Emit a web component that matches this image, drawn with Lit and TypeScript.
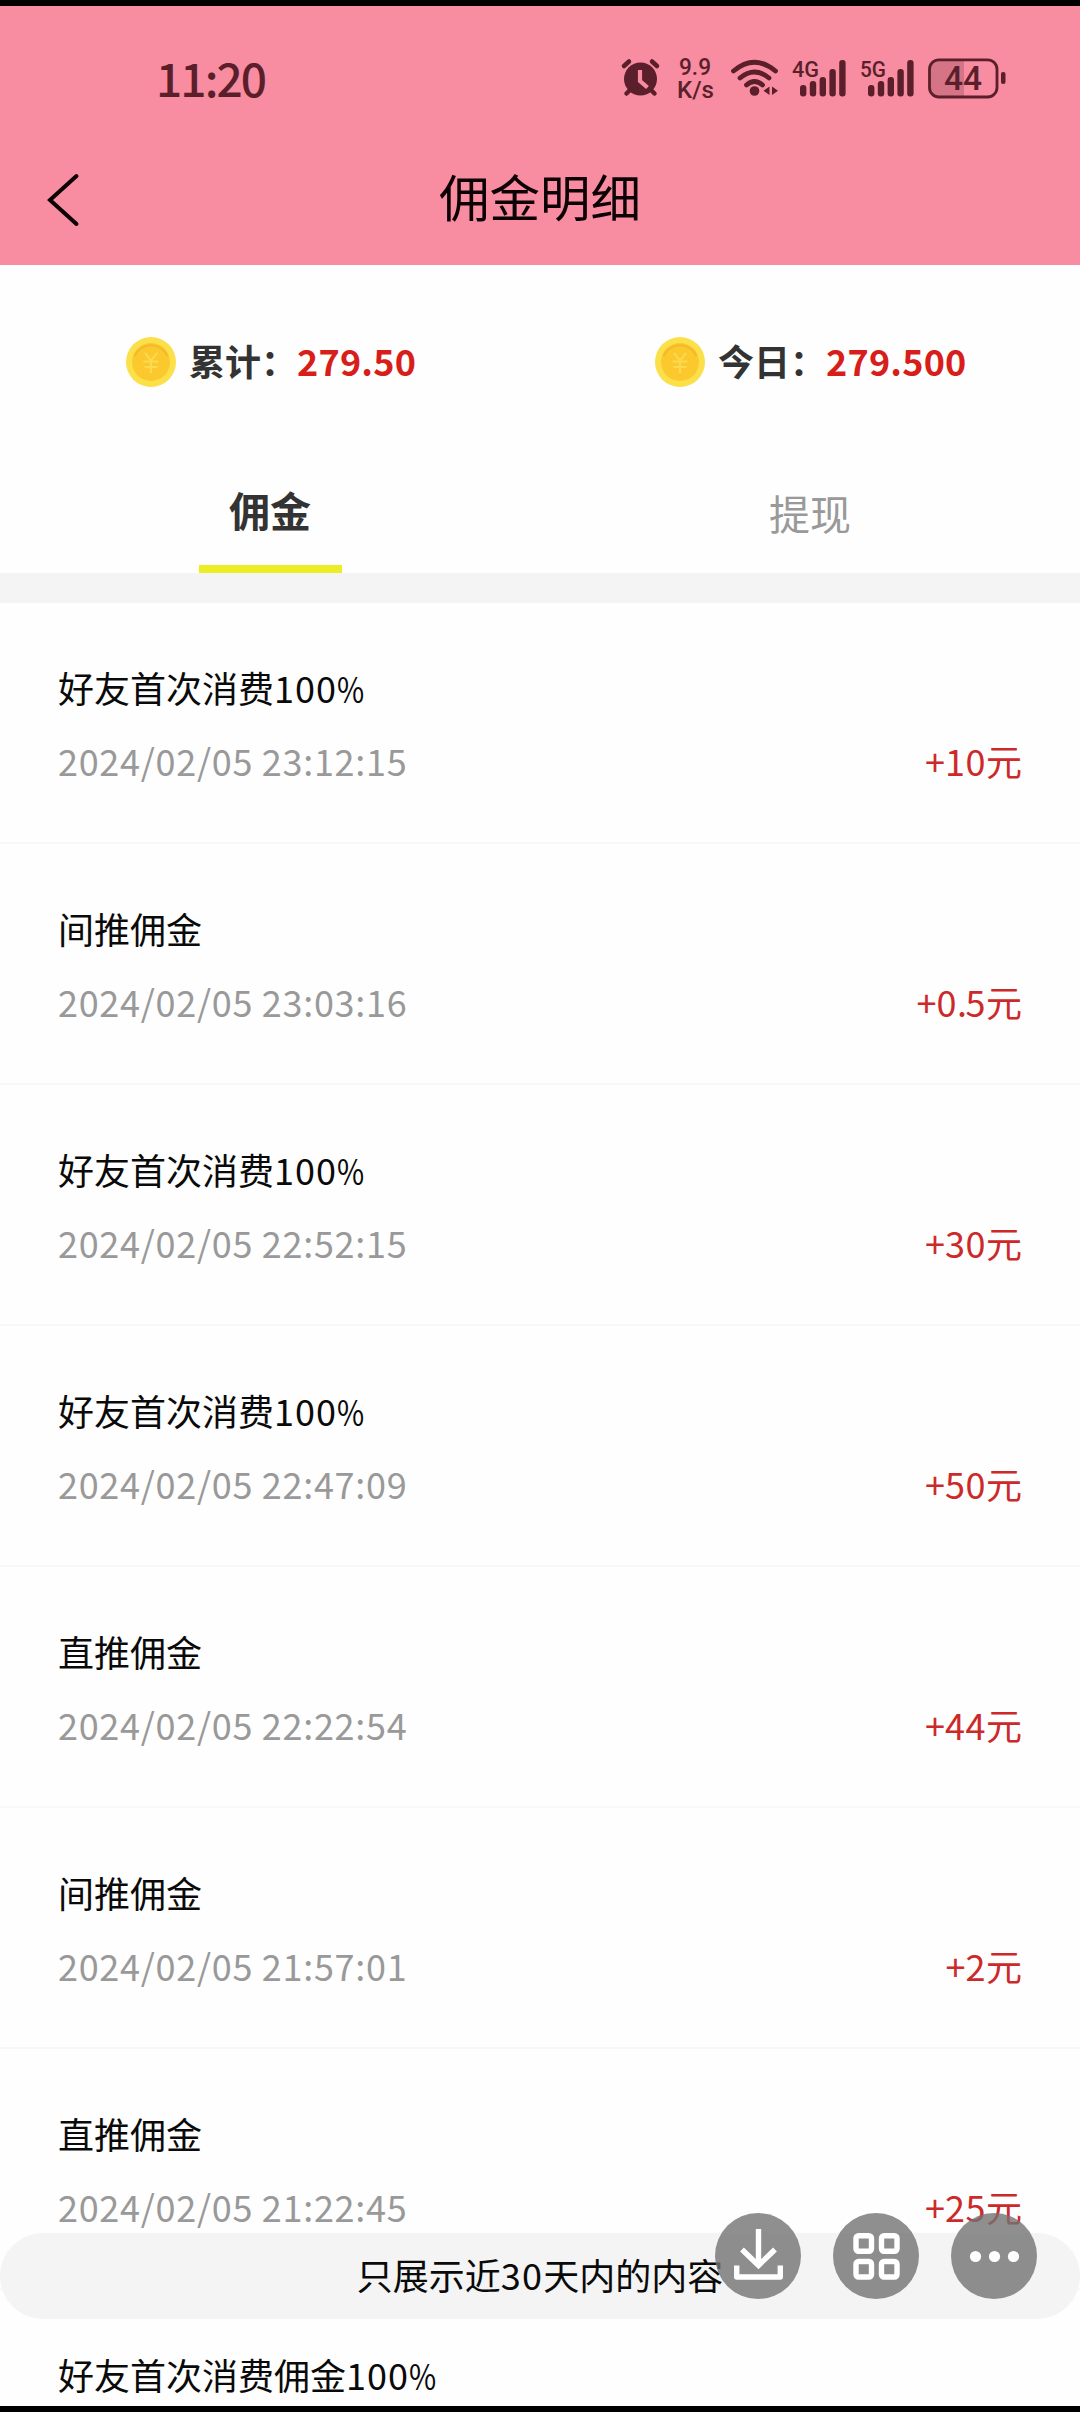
import { LitElement, html, svg, css } from "lit";
import { customElement, property } from "lit/decorators.js";

interface Entry {
  title: string;
  time: string;
  amount: string;
}

const ENTRIES: Entry[] = [
  { title: "好友首次消费100%", time: "2024/02/05 23:12:15", amount: "+10元" },
  { title: "间推佣金", time: "2024/02/05 23:03:16", amount: "+0.5元" },
  { title: "好友首次消费100%", time: "2024/02/05 22:52:15", amount: "+30元" },
  { title: "好友首次消费100%", time: "2024/02/05 22:47:09", amount: "+50元" },
  { title: "直推佣金", time: "2024/02/05 22:22:54", amount: "+44元" },
  { title: "间推佣金", time: "2024/02/05 21:57:01", amount: "+2元" },
  { title: "直推佣金", time: "2024/02/05 21:22:45", amount: "+25元" },
  { title: "好友首次消费佣金100%", time: "", amount: "" },
];

// Wraps digits, points and percent signs so they can be spaced apart from the Chinese text.
const mixed = (text: string) =>
  text
    .split(/(\d+|\.|%)/)
    .filter((part) => part !== "")
    .map((part) =>
      part === "."
        ? html`<span class="dot">${part}</span>`
        : part === "%"
          ? html`<span class="pct">${part}</span>`
          : /\d/.test(part)
            ? html`<span class="num">${part}</span>`
            : part
    );

@customElement("status-bar")
class StatusBar extends LitElement {
  static styles = css`
    :host {
      display: flex;
      align-items: center;
      justify-content: space-between;
      height: 146px;
      box-sizing: border-box;
      padding: 0 60px 0 156px;
      color: #5a1f2b;
      font-family: "Noto Sans CJK SC", sans-serif;
    }
    .time {
      margin-top: -4px;
      font-size: 46px;
      font-weight: 500;
      line-height: 60px;
      letter-spacing: -1.9px;
    }
    svg {
      display: block;
      width: 420px;
      height: 80px;
    }
    text {
      fill: #5a1f2b;
      font-family: Roboto, sans-serif;
      font-weight: 500;
    }
  `;
  private bars(x: number) {
    const tops = [46, 42, 38, 30, 21];
    return tops.map(
      (top, i) =>
        svg`<rect x=${x + i * 9.8} y=${top} width="6.4" height=${57.5 - top} rx="3" fill="#5a1f2b"/>`
    );
  }
  render() {
    return html`
      <span class="time">11:20</span>
      <svg viewBox="0 0 420 80">
        <g stroke="#5a1f2b" fill="none" stroke-linecap="round">
          <circle cx="40.5" cy="40" r="16.5" fill="#5a1f2b" stroke="none" />
          <path d="M24 27 L29 22.500 M57 27 L52 22.500" stroke-width="4.500" />
          <path d="M29 52 L26.500 54.500 M52 52 L54.500 54.500" stroke-width="4.500" />
          <path d="M40 31 V42 L47.500 48.500" stroke="#f78b9f" stroke-width="4.200" stroke-linecap="butt" />
          <path d="M133.500 32 Q154.500 14.500 175.500 32" stroke-width="4.800" />
          <path d="M140 39 Q154.500 27 169 39" stroke-width="4.800" />
          <path d="M146.500 46 Q154.500 39 162.500 46" stroke-width="4.800" />
        </g>
        <circle cx="154.500" cy="52" r="4.800" fill="#5a1f2b" />
        <path d="M169.500 47.500 V56 L163.500 51.700Z M172 47.500 V56 L178 51.700Z" fill="#5a1f2b" />
        <text x="79" y="36" font-size="23" textLength="32" lengthAdjust="spacingAndGlyphs">9.9</text>
        <text x="77" y="59" font-size="23" textLength="37" lengthAdjust="spacingAndGlyphs">K/s</text>
        <text x="192" y="37.500" font-size="22" textLength="27" lengthAdjust="spacingAndGlyphs">4G</text>
        ${this.bars(200)}
        <text x="260" y="37.500" font-size="22" textLength="26" lengthAdjust="spacingAndGlyphs">5G</text>
        ${this.bars(268)}
        <path d="M338 21 H364 V57.500 H338 Q329.500 57.500 329.500 49 V30 Q329.500 21 338 21Z" fill="#5a1f2b" fill-opacity=".22" />
        <rect x="329.500" y="20.800" width="67.500" height="37.200" rx="9.500" fill="none" stroke="#5a1f2b" stroke-width="2.800" />
        <rect x="401" y="33" width="4.500" height="12" rx="2" fill="#5a1f2b" />
        <text x="344" y="51" font-size="33" textLength="38" lengthAdjust="spacingAndGlyphs">44</text>
      </svg>
    `;
  }
}

@customElement("coin-stat")
class CoinStat extends LitElement {
  @property() label = "";
  @property() value = "";
  static styles = css`
    :host {
      display: flex;
      align-items: center;
      color: #333;
      font: 700 36px/46px "Noto Sans CJK SC", sans-serif;
    }
    svg {
      display: block;
      width: 50px;
      height: 50px;
      margin-right: 13px;
    }
    .label {
      width: 108px;
      margin-top: -5px;
      white-space: nowrap;
    }
    .value {
      margin-top: -5px;
      color: #d81e1a;
      letter-spacing: 0.2px;
    }
  `;
  render() {
    return html`
      <svg viewBox="0 0 50 50">
        <circle cx="25" cy="25" r="25" fill="#fbe04a" />
        <circle cx="25" cy="25" r="19" fill="#fbc92d" />
        <path d="M8.500 19 A18 18 0 0 1 41.500 19" fill="none" stroke="#f2b92e" stroke-width="2" />
        <path d="M19 16 L25 23.500 L31 16 M25 23.500 V36 M17.500 24.500 H32.500 M18.500 30 H31.500" fill="none" stroke="#fdda50" stroke-width="2" />
      </svg>
      <span class="label">${this.label}</span>
      <span class="value">${this.value}</span>
    `;
  }
}

@customElement("entry-row")
class EntryRow extends LitElement {
  @property({ attribute: false }) entry!: Entry;
  static styles = css`
    :host {
      display: flex;
      flex-direction: column;
      flex: none;
      box-sizing: border-box;
      height: 241px;
      padding: 58px 58px 0;
      border-bottom: 2px solid #f8f8f8;
      font: 400 36px/52px "Noto Sans CJK SC", sans-serif;
      color: #0a0a0a;
    }
    .meta {
      display: flex;
      justify-content: space-between;
      margin-top: 21px;
    }
    .time {
      color: #999;
      letter-spacing: 0.7px;
    }
    .amount {
      color: #cc2a2a;
    }
    .title .num {
      letter-spacing: 1px;
    }
    .amount .num {
      letter-spacing: 0.5px;
    }
    .amount .dot {
      letter-spacing: -1.5px;
    }
    .pct {
      display: inline-block;
      transform: scaleX(0.82);
      transform-origin: 0 50%;
    }
  `;
  render() {
    return html`
      <div class="title">${mixed(this.entry.title)}</div>
      <div class="meta">
        <span class="time">${this.entry.time}</span>
        <span class="amount">${mixed(this.entry.amount)}</span>
      </div>
    `;
  }
}

@customElement("app-root")
class AppRoot extends LitElement {
  static styles = css`
    :host {
      display: block;
      position: relative;
      box-sizing: border-box;
      width: 1080px;
      height: 2412px;
      overflow: hidden;
      border-top: 6px solid #000;
      border-bottom: 6px solid #000;
      background: #fefefe;
      font-family: "Noto Sans CJK SC", sans-serif;
    }
    .header {
      height: 259px;
      background: #f88ca0;
    }
    .nav {
      display: grid;
      grid-template-columns: 120px 1fr 120px;
      align-items: center;
      height: 90px;
    }
    .back {
      display: block;
      width: 36px;
      height: 56px;
      margin: 5px 0 0 45px;
    }
    h1 {
      margin: -5px 0 0;
      color: #0c0205;
      font-size: 50.5px;
      font-weight: 400;
      line-height: 72px;
      text-align: center;
    }
    .stats {
      display: grid;
      grid-template-columns: 529px 1fr;
      padding: 72px 0 0 126px;
      height: 50px;
    }
    .tabs {
      display: grid;
      grid-template-columns: 1fr 1fr;
      height: 186px;
    }
    .tab {
      display: flex;
      flex-direction: column;
      align-items: center;
      justify-content: space-between;
      box-sizing: border-box;
      padding-top: 95px;
      color: #999;
      font-size: 41px;
      line-height: 60px;
    }
    .tab.active {
      padding-top: 92px;
      color: #333;
      font-weight: 700;
    }
    .line {
      width: 143px;
      height: 8px;
      background: #eded26;
    }
    .band {
      height: 30px;
      background: #f4f4f4;
    }
    .list {
      display: flex;
      flex-direction: column;
    }
    .notice {
      position: absolute;
      left: 0;
      right: 0;
      bottom: 87px;
      height: 86px;
      border-radius: 43px;
      background: #f4f4f4;
      color: #0a0a0a;
      font-size: 36px;
      line-height: 82px;
      text-align: center;
    }
    .notice .num {
      letter-spacing: 1.2px;
    }
    .actions {
      position: absolute;
      right: 43px;
      bottom: 107px;
      display: flex;
      gap: 32px;
    }
    .action {
      width: 86px;
      height: 86px;
      border-radius: 50%;
      background: rgba(115, 115, 115, 0.8);
    }
    .action svg {
      display: block;
      width: 86px;
      height: 86px;
      fill: none;
      stroke: #fff;
      stroke-width: 5.4px;
    }
  `;
  render() {
    return html`
      <div class="header">
        <status-bar></status-bar>
        <div class="nav">
          <svg class="back" viewBox="0 0 36 56">
            <path d="M31.500 4 L5 28 L31.500 52" fill="none" stroke="#0c0205" stroke-width="4" stroke-linecap="round" />
          </svg>
          <h1>佣金明细</h1>
        </div>
      </div>
      <div class="stats">
        <coin-stat label="累计：" value="279.50"></coin-stat>
        <coin-stat label="今日：" value="279.500"></coin-stat>
      </div>
      <div class="tabs">
        <div class="tab active">佣金<span class="line"></span></div>
        <div class="tab">提现</div>
      </div>
      <div class="band"></div>
      <div class="list">
        ${ENTRIES.map((entry) => html`<entry-row .entry=${entry}></entry-row>`)}
      </div>
      <div class="notice">${mixed("只展示近30天内的内容")}</div>
      <div class="actions">
        <div class="action">
          <svg viewBox="0 0 86 86">
            <path d="M43.500 16 V52 M27 36.500 L43.500 52.500 L60 36.500" />
            <path d="M21.700 52.500 V64 H65.300 V52.500" stroke-linejoin="round" />
          </svg>
        </div>
        <div class="action">
          <svg viewBox="0 0 86 86">
            <rect x="23" y="22.700" width="15.500" height="15.500" rx="2.500" />
            <rect x="48.500" y="22.700" width="15.500" height="15.500" rx="2.500" />
            <rect x="23" y="48.500" width="15.500" height="15.500" rx="2.500" />
            <rect x="48.500" y="48.500" width="15.500" height="15.500" rx="2.500" />
          </svg>
        </div>
        <div class="action">
          <svg viewBox="0 0 86 86">
            <g fill="#fff" stroke="none">
              <circle cx="24.500" cy="43.500" r="5.600" />
              <circle cx="43.500" cy="43.500" r="5.600" />
              <circle cx="62.500" cy="43.500" r="5.600" />
            </g>
          </svg>
        </div>
      </div>
    `;
  }
}
